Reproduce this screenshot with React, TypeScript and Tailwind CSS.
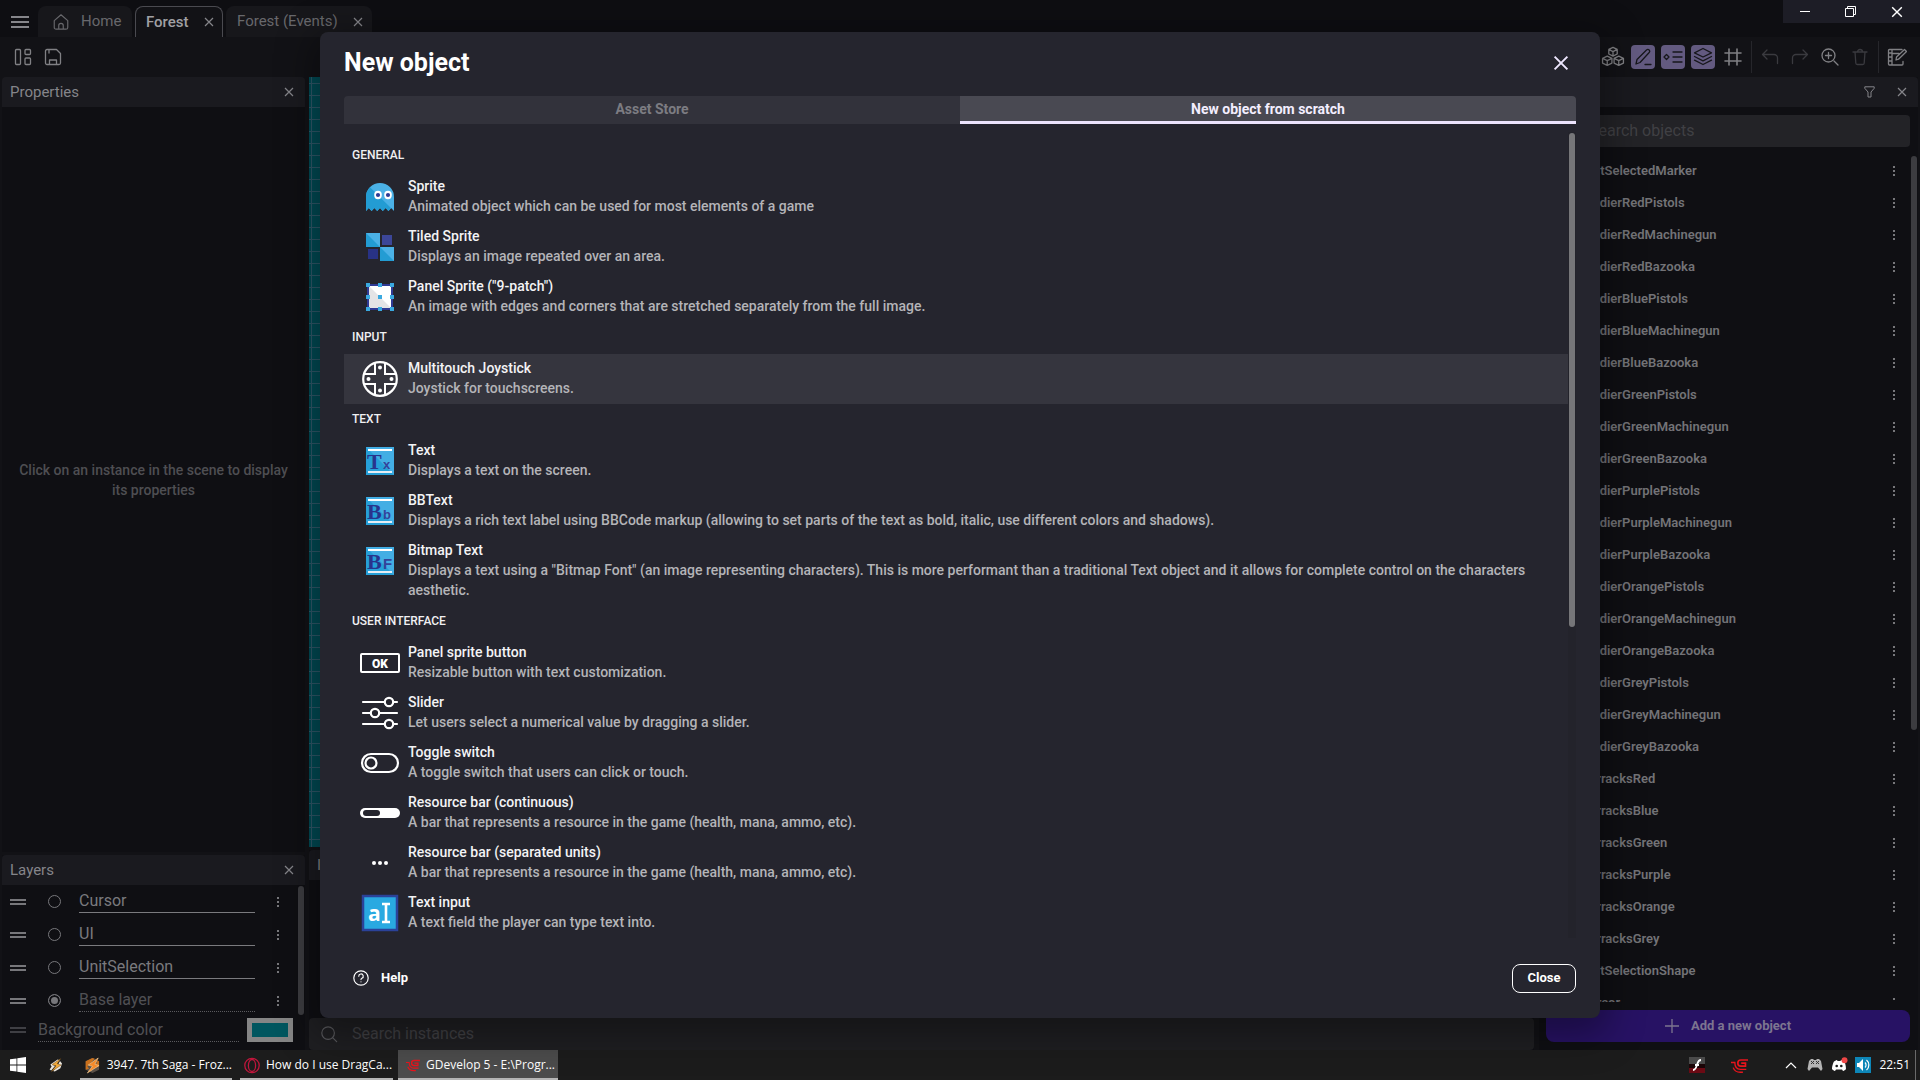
import React from "react";

type P = { className?: string; size?: number; children?: React.ReactNode };

const Svg = ({ size = 20, className = "", children }: P) => (
  <svg
    width={size}
    height={size}
    viewBox="0 0 20 20"
    fill="none"
    stroke="currentColor"
    strokeWidth="1.3"
    strokeLinecap="round"
    strokeLinejoin="round"
    className={"shrink-0 " + className}
    aria-hidden="true"
  >
    {children}
  </svg>
);

const Cross = ({ size = 10, className = "" }: P) => (
  <svg width={size} height={size} viewBox="0 0 10 10" fill="none" stroke="currentColor" strokeWidth="1.2" className={"shrink-0 " + className} aria-hidden="true">
    <path d="M1 1l8 8M9 1l-8 8" />
  </svg>
);

const Dots = () => (
  <svg width="4" height="12" viewBox="0 0 4 12" fill="currentColor" aria-hidden="true">
    <rect x="1" y="1" width="2" height="2" />
    <rect x="1" y="5" width="2" height="2" />
    <rect x="1" y="9" width="2" height="2" />
  </svg>
);

/* ---------- object icons ---------- */

const I40 = ({ children }: { children: React.ReactNode }) => (
  <svg width="40" height="40" viewBox="0 0 40 40" fill="none" className="-mb-px mt-px shrink-0" aria-hidden="true">
    {children}
  </svg>
);

const GhostIcon = () => (
  <I40>
    <path d="M6 34V20a14 14 0 0 1 28 0v14l-2.800-3-2.800 3-2.800-3-2.800 3-2.800-3-2.800 3-2.800-3-2.800 3-2.800-3z" fill="#4bb1e6" />
    <path d="M10 10.200a14 14 0 0 0-4 9.800v14l2.800-3 2.800 3 2.800-3 2.800 3 2.800-3 2.800 3 2.800-3 2.800 3 2.800-3 2.800 3z" fill="#239cd3" />
    <ellipse cx="18" cy="18" rx="3.800" ry="4.200" fill="#fff" />
    <ellipse cx="28" cy="18" rx="3.800" ry="4.200" fill="#fff" />
    <circle cx="18" cy="18" r="2.100" fill="#2e3b94" />
    <circle cx="28" cy="18" r="2.100" fill="#2e3b94" />
  </I40>
);

const TiledIcon = () => (
  <I40>
    <path d="M6 6h14v14H6z" fill="#4bb1e6" />
    <path d="M6 6l14 14H6z" fill="#239cd3" />
    <path d="M20 20h14v14H20z" fill="#4bb1e6" />
    <path d="M20 20l14 14H20z" fill="#239cd3" />
    <path d="M22 8h10v10H22z" fill="#3c4698" />
    <path d="M8 22h10v10H8z" fill="#283286" />
  </I40>
);

const PanelIcon = () => (
  <I40>
    <path d="M8 8h24v24H8z" fill="#fff" />
    <path d="M8 8l24 24H8z" fill="#e4e4e6" />
    <path d="M8 8h24v24H8z" stroke="#2f3a94" strokeWidth="2" />
    <g fill="#3aa9e0">
      <path d="M6 6h4v4H6zM18 6h4v4h-4zM30 6h4v4h-4zM6 18h4v4H6zM18 18h4v4h-4zM30 18h4v4h-4zM6 30h4v4H6zM18 30h4v4h-4zM30 30h4v4h-4z" />
    </g>
  </I40>
);

const JoystickIcon = () => (
  <I40>
    <circle cx="20" cy="20" r="16.800" stroke="#fff" strokeWidth="2.200" />
    <path d="M15 4v11H4M25 4v11h11M15 36V25H4M25 36V25h11" stroke="#fff" strokeWidth="2" />
    <g fill="#fff">
      <circle cx="20" cy="8.500" r="2" />
      <circle cx="20" cy="31.500" r="2" />
      <circle cx="8.500" cy="20" r="2" />
      <circle cx="31.500" cy="20" r="2" />
    </g>
  </I40>
);

const LetterIcon = ({ big, small, upper }: { big: string; small: string; upper?: boolean }) => (
  <I40>
    <path d="M6 6h28v28H6z" fill="#43aee4" />
    <path d="M6 6l28 28H6z" fill="#26a0d8" />
    <path d="M8 8h24v2H8z" fill="#fff" />
    <path d="M8 30h24v2H8z" fill="#e6eef5" />
    <text x="7" y="28" fill="#28348c" fontFamily="Liberation Serif, serif" fontWeight="700" fontSize="22">
      {big}
    </text>
    <text x="23" y="28" fill="#34439a" fontFamily="Liberation Sans, sans-serif" fontWeight="700" fontSize={upper ? 15 : 13}>
      {small}
    </text>
  </I40>
);

const OkIcon = () => (
  <I40>
    <rect x="1" y="11" width="38" height="18" rx="1" stroke="#fff" strokeWidth="2" />
    <text x="20" y="25" textAnchor="middle" fill="#fff" fontFamily="Roboto, sans-serif" fontWeight="900" fontSize="12">
      OK
    </text>
  </I40>
);

const SliderIcon = () => (
  <I40>
    <g stroke="#fff" strokeWidth="2.200" strokeLinecap="round">
      <path d="M3 9h21M34 9h3M3 20h7M20 20h17M3 31h21M34 31h3" />
      <circle cx="29" cy="9" r="4.200" />
      <circle cx="15" cy="20" r="4.200" />
      <circle cx="29" cy="31" r="4.200" />
    </g>
  </I40>
);

const ToggleIcon = () => (
  <I40>
    <rect x="2" y="11" width="36" height="18" rx="9" stroke="#fff" strokeWidth="2.200" />
    <circle cx="11" cy="20" r="5.500" stroke="#fff" strokeWidth="2.200" />
  </I40>
);

const BarIcon = () => (
  <I40>
    <rect x="0" y="15" width="40" height="10" rx="5" fill="#fff" />
    <rect x="3" y="17" width="17" height="6" rx="3" fill="#25252e" />
  </I40>
);

const UnitsIcon = () => (
  <I40>
    <circle cx="14" cy="20" r="2" fill="#fff" />
    <circle cx="20" cy="20" r="2" fill="#fff" />
    <circle cx="26" cy="20" r="2" fill="#fff" />
  </I40>
);

const InputIcon = () => (
  <I40>
    <rect x="3" y="3" width="34" height="34" fill="#29a9e1" stroke="#2b4299" strokeWidth="2.500" />
    <text x="8" y="28" fill="#fff" fontFamily="Open Sans, sans-serif" fontWeight="700" fontSize="21">
      a
    </text>
    <path d="M22 11h8M22 29h8M26 11v18" stroke="#fff" strokeWidth="2.600" />
  </I40>
);

/* ---------- data ---------- */

type Item = { icon: React.ReactNode; title: string; text: string; active?: boolean };

const SECTIONS: { name: string; items: Item[] }[] = [
  {
    name: "GENERAL",
    items: [
      { icon: <GhostIcon />, title: "Sprite", text: "Animated object which can be used for most elements of a game" },
      { icon: <TiledIcon />, title: "Tiled Sprite", text: "Displays an image repeated over an area." },
      { icon: <PanelIcon />, title: 'Panel Sprite ("9-patch")', text: "An image with edges and corners that are stretched separately from the full image." },
    ],
  },
  { name: "INPUT", items: [{ icon: <JoystickIcon />, title: "Multitouch Joystick", text: "Joystick for touchscreens.", active: true }] },
  {
    name: "TEXT",
    items: [
      { icon: <LetterIcon big="T" small="x" />, title: "Text", text: "Displays a text on the screen." },
      { icon: <LetterIcon big="B" small="b" />, title: "BBText", text: "Displays a rich text label using BBCode markup (allowing to set parts of the text as bold, italic, use different colors and shadows)." },
      {
        icon: <LetterIcon big="B" small="F" upper />,
        title: "Bitmap Text",
        text: 'Displays a text using a "Bitmap Font" (an image representing characters). This is more performant than a traditional Text object and it allows for complete control on the characters aesthetic.',
      },
    ],
  },
  {
    name: "USER INTERFACE",
    items: [
      { icon: <OkIcon />, title: "Panel sprite button", text: "Resizable button with text customization." },
      { icon: <SliderIcon />, title: "Slider", text: "Let users select a numerical value by dragging a slider." },
      { icon: <ToggleIcon />, title: "Toggle switch", text: "A toggle switch that users can click or touch." },
      { icon: <BarIcon />, title: "Resource bar (continuous)", text: "A bar that represents a resource in the game (health, mana, ammo, etc)." },
      { icon: <UnitsIcon />, title: "Resource bar (separated units)", text: "A bar that represents a resource in the game (health, mana, ammo, etc)." },
      { icon: <InputIcon />, title: "Text input", text: "A text field the player can type text into." },
    ],
  },
];

const OBJECTS = [
  "UnitSelectedMarker",
  "SoldierRedPistols",
  "SoldierRedMachinegun",
  "SoldierRedBazooka",
  "SoldierBluePistols",
  "SoldierBlueMachinegun",
  "SoldierBlueBazooka",
  "SoldierGreenPistols",
  "SoldierGreenMachinegun",
  "SoldierGreenBazooka",
  "SoldierPurplePistols",
  "SoldierPurpleMachinegun",
  "SoldierPurpleBazooka",
  "SoldierOrangePistols",
  "SoldierOrangeMachinegun",
  "SoldierOrangeBazooka",
  "SoldierGreyPistols",
  "SoldierGreyMachinegun",
  "SoldierGreyBazooka",
  "BarracksRed",
  "BarracksBlue",
  "BarracksGreen",
  "BarracksPurple",
  "BarracksOrange",
  "BarracksGrey",
  "UnitSelectionShape",
  "Cursor",
];

/* ---------- editor ---------- */

const PanelHeader = ({ title, children }: { title: string; children?: React.ReactNode }) => (
  <div className="flex h-[30px] shrink-0 items-center rounded-t bg-[#1a1a1f] pl-2 pr-[11px] text-[#85858a]">
    <h2 className="flex-1 text-[15px]">{title}</h2>
    {children}
  </div>
);

const CloseBtn = ({ label }: { label: string }) => (
  <button aria-label={label} className="text-[#85858a]">
    <Cross />
  </button>
);

const TopBar = () => (
  <header className="flex h-[37px] shrink-0 items-end bg-[#0e0e12] pl-[11px] text-[15px]">
    <button aria-label="Main menu" className="mb-2 mr-[9px] text-[#85858a]">
      <svg width="18" height="14" viewBox="0 0 18 14" fill="none" stroke="currentColor" strokeWidth="2" aria-hidden="true">
        <path d="M0 2h18M0 7h18M0 12h18" />
      </svg>
    </button>
    <nav className="flex items-end gap-[3px]">
      <button className="flex h-[31px] w-[94px] items-center gap-[11px] rounded-t-lg bg-[#17171b] pl-[14px] text-[#68686c]">
        <Svg size={18}>
          <path d="M2.500 8.500L10 2l7.500 6.500V16a2 2 0 0 1-2 2h-11a2 2 0 0 1-2-2zM7.500 18v-4a2.500 2.500 0 0 1 5 0v4" />
        </Svg>
        Home
      </button>
      <div className="flex h-[31px] w-[88px] items-center justify-between rounded-t-lg border border-b-0 border-[#4a4a50] bg-[#121216] pl-[10px] pr-2 text-[#a0a0a4]">
        <button className="font-medium">Forest</button>
        <CloseBtn label="Close Forest" />
      </div>
      <div className="flex h-[31px] w-[146px] items-center justify-between rounded-t-lg bg-[#17171b] pl-[11px] pr-[9px] text-[#68686c]">
        <button>Forest (Events)</button>
        <CloseBtn label="Close Forest (Events)" />
      </div>
    </nav>
    <div className="ml-auto flex h-[23px] w-[137px] items-center justify-around self-start bg-[#1d1d26] text-white">
      <button aria-label="Minimize" className="h-px w-[10px] bg-white" />
      <button aria-label="Restore">
        <svg width="11" height="11" viewBox="0 0 11 11" fill="none" stroke="currentColor" aria-hidden="true">
          <path d="M.5 2.500h8v8h-8zM2.500 2.500v-2h8v8h-2" />
        </svg>
      </button>
      <button aria-label="Close window">
        <Cross size={12} />
      </button>
    </div>
  </header>
);

const ToolOn = ({ label, children }: { label: string; children: React.ReactNode }) => (
  <button aria-label={label} className="flex size-6 items-center justify-center rounded bg-[#635a80] text-[#17171b]">
    {children}
  </button>
);

const Toolbar = () => (
  <div className="flex h-10 shrink-0 items-center bg-[#121216] pl-[13px] pr-[13px] text-[#808084]">
    <button aria-label="Open panels" className="mr-[10px]">
      <Svg>
        <rect x="2.500" y="2.500" width="5" height="15" rx="1" />
        <rect x="12" y="2.500" width="5.500" height="5" rx="1" />
        <rect x="12" y="11" width="5.500" height="6.500" rx="1" />
      </Svg>
    </button>
    <button aria-label="Save">
      <Svg>
        <path d="M2.500 4a1.500 1.500 0 0 1 1.500-1.500h9.500l4 4V16a1.500 1.500 0 0 1-1.500 1.500H4A1.500 1.500 0 0 1 2.500 16zM6 2.500V6M6.500 17.500V13h7v4.500" />
      </Svg>
    </button>
    <div className="ml-auto flex items-center gap-[6px]">
      <button aria-label="Objects">
        <Svg size={24} className="[stroke-width:1.1]">
          <path d="M10 2l3.500 1.700v3.800L10 9.300 6.500 7.500V3.700zM6.500 3.700L10 5.500l3.500-1.800M10 5.500v3.800" />
          <path d="M5.200 9.200l3.900 1.900v4L5.200 17l-3.900-1.900v-4zM1.300 11.100L5.200 13l3.900-1.900M5.200 13v4" />
          <path d="M14.800 9.200l3.900 1.900v4L14.800 17l-3.900-1.900v-4zM10.900 11.100l3.900 1.900 3.900-1.900M14.800 13v4" />
        </Svg>
      </button>
      <ToolOn label="Edit properties">
        <Svg>
          <path d="M3 17l1-4.500L13.500 3a1.800 1.800 0 0 1 2.700 0 1.800 1.800 0 0 1 0 2.500L7 15.500zM12 17.500h6" />
        </Svg>
      </ToolOn>
      <ToolOn label="Instances list">
        <Svg>
          <path d="M3.500 7.500L6 10l-2.500 2.500L1 10zM10 5h9M10 10h9M10 15h9" />
        </Svg>
      </ToolOn>
      <ToolOn label="Layers">
        <Svg>
          <path d="M10 1.500l8.500 4.300L10 10 1.500 5.800zM1.500 9.500L10 13.800l8.500-4.300M1.500 13.200L10 17.500l8.500-4.300" />
        </Svg>
      </ToolOn>
      <button aria-label="Toggle grid" className="ml-[2px]">
        <Svg className="[stroke-width:1.6]">
          <path d="M6 2v16M14 2v16M2 6h16M2 14h16" />
        </Svg>
      </button>
      <span className="mx-[2px] h-8 w-px bg-[#26262b]" />
      <button aria-label="Undo" className="mr-1 text-[#3a3a3f]">
        <Svg>
          <path d="M7 3L2.500 7.500 7 12M2.500 7.500H14a3.500 3.500 0 0 1 3.500 3.500v5.500" />
        </Svg>
      </button>
      <button aria-label="Redo" className="mr-1 text-[#3a3a3f]">
        <Svg>
          <path d="M13 3l4.500 4.500L13 12M17.500 7.500H6A3.500 3.500 0 0 0 2.500 11v5.500" />
        </Svg>
      </button>
      <button aria-label="Zoom in" className="mr-1">
        <Svg>
          <path d="M14 14l4 4M8.500 5.500v6M5.500 8.500h6" />
          <circle cx="8.500" cy="8.500" r="6.500" />
        </Svg>
      </button>
      <button aria-label="Delete" className="text-[#3a3a3f]">
        <Svg>
          <path d="M3 5h14M5 5l.8 11a1.500 1.500 0 0 0 1.500 1.500h5.400a1.500 1.500 0 0 0 1.500-1.500L15 5M7.500 5a2.500 2.500 0 0 1 5 0" />
        </Svg>
      </button>
      <span className="mx-[2px] h-8 w-px bg-[#26262b]" />
      <button aria-label="Scene properties">
        <Svg>
          <path d="M16 14.500V17a1 1 0 0 1-1 1H2.500a1 1 0 0 1-1-1V3.500a1 1 0 0 1 1-1H15M5 2.500V18M1.500 6H5M1.500 10H5M1.500 14H5M9 13l.5-3 8-7.500 2 2-8 7.700zM5 6.500h7" />
        </Svg>
      </button>
    </div>
  </div>
);

const Handle = ({ dim }: { dim?: boolean }) => (
  <span className={"flex h-[6px] w-4 shrink-0 flex-col justify-between " + (dim ? "text-[#3f3f44]" : "text-[#77777b]")}>
    <span className="h-[2px] bg-current" />
    <span className="h-[2px] bg-current" />
  </span>
);

const LayerRow = ({ name, base }: { name: string; base?: boolean }) => (
  <div className="flex h-[33px] items-center pl-2">
    <Handle />
    <input
      type="radio"
      name="layer"
      aria-label={"Select layer " + name}
      defaultChecked={base}
      className="ml-[22px] mr-[18px] size-[13px] shrink-0 appearance-none rounded-full border border-[#77777b] checked:bg-[#77777b] checked:shadow-[inset_0_0_0_2px_#0f0f13]"
    />
    <input
      aria-label={"Layer name " + name}
      defaultValue={name}
      className={
        "h-[23px] w-[176px] border-b bg-transparent text-base outline-none " +
        (base ? "border-dotted border-[#5a5a5e] text-[#505054]" : "border-[#7a7a7e] text-[#7a7a7e]")
      }
    />
    <button aria-label={"Options for " + name} className="ml-[21px] text-[#77777b]">
      <Dots />
    </button>
  </div>
);

const LeftColumn = () => (
  <aside className="flex w-[303px] shrink-0 flex-col gap-[3px]">
    <section className="flex min-h-0 flex-1 flex-col">
      <PanelHeader title="Properties">
        <CloseBtn label="Close properties" />
      </PanelHeader>
      <div className="flex flex-1 items-center justify-center bg-[#0f0f13] px-3 text-center text-sm font-medium leading-5 text-[#4e4e52]">
        Click on an instance in the scene to display its properties
      </div>
    </section>
    <section className="flex h-[195px] flex-col bg-[#0f0f13]">
      <PanelHeader title="Layers">
        <CloseBtn label="Close layers" />
      </PanelHeader>
      <div className="flex">
        <div className="flex-1">
          <LayerRow name="Cursor" />
          <LayerRow name="UI" />
          <LayerRow name="UnitSelection" />
          <LayerRow name="Base layer" base />
        </div>
        <div className="mr-px mt-px h-[129px] w-[6px] rounded bg-[#3c3c40]" />
      </div>
      <div className="flex h-[26px] items-center pl-2">
        <Handle dim />
        <input
          aria-label="Background color"
          defaultValue="Background color"
          readOnly
          className="ml-3 h-6 w-[201px] border-b border-dotted border-[#5a5a5e] bg-transparent text-base text-[#505054] outline-none"
        />
        <button aria-label="Pick background color" className="ml-2 h-6 w-[46px] border-[5px] border-[#858585] bg-[#00565f]" />
      </div>
    </section>
  </aside>
);

const Center = () => (
  <main className="flex min-w-0 flex-1 flex-col gap-[3px]">
    <div className="flex-1 bg-[#004a54] bg-[linear-gradient(#2f5768_1px,transparent_1px),linear-gradient(90deg,#2f5768_1px,transparent_1px)] bg-[size:12px_12px] bg-[position:2px_6px]" />
    <section className="flex h-[200px] flex-col bg-[#0f0f13]">
      <PanelHeader title="Instances List" />
      <label className="mt-auto flex h-8 items-center gap-[14px] rounded bg-[#1f1f22] pl-[11px] text-[#5a5a5e]">
        <Svg size={18}>
          <circle cx="9" cy="9" r="7" />
          <path d="M14 14l4.500 4.500" />
        </Svg>
        <input aria-label="Search instances" placeholder="Search instances" className="flex-1 bg-transparent text-base outline-none placeholder:text-[#404044]" />
      </label>
    </section>
  </main>
);

const RightColumn = () => (
  <aside className="flex w-[379px] shrink-0 flex-col bg-[#0f0f13] pb-2">
    <PanelHeader title="Objects">
      <button aria-label="Filter" className="mr-[22px] text-[#85858a]">
        <svg width="11" height="12" viewBox="0 0 11 12" fill="none" stroke="currentColor" aria-hidden="true">
          <path d="M.8.800h9.400v1.500L7 6v5H4V6L.8 2.300z" />
        </svg>
      </button>
      <CloseBtn label="Close objects" />
    </PanelHeader>
    <label className="ml-[7px] mr-2 mt-2 flex h-8 shrink-0 items-center gap-[14px] rounded bg-[#232327] pl-[11px] text-[#5a5a5e]">
      <Svg size={18}>
        <circle cx="9" cy="9" r="7" />
        <path d="M14 14l4.500 4.500" />
      </Svg>
      <input aria-label="Search objects" placeholder="Search objects" className="min-w-0 flex-1 bg-transparent text-base outline-none placeholder:text-[#404044]" />
    </label>
    <div className="mt-2 flex min-h-0 flex-1 overflow-hidden">
      <ul className="flex-1">
        {OBJECTS.map((o) => (
          <li key={o} className="flex h-8 items-center pl-[42px] pr-[15px] text-[13px] font-semibold text-[#737377]">
            <span className="flex-1">{o}</span>
            <button aria-label={"Options for " + o} className="text-[#77777b]">
              <Dots />
            </button>
          </li>
        ))}
      </ul>
      <div className="mr-px mt-px h-[574px] w-[6px] rounded bg-[#3c3c40]" />
    </div>
    <button className="ml-[7px] mr-2 mt-2 flex h-8 shrink-0 items-center justify-center gap-3 rounded-lg bg-[#271264] text-[13px] font-bold text-[#7d7590]">
      <svg width="14" height="14" viewBox="0 0 14 14" stroke="currentColor" strokeWidth="1.300" aria-hidden="true">
        <path d="M7 0v14M0 7h14" />
      </svg>
      Add a new object
    </button>
  </aside>
);

/* ---------- dialog ---------- */

const Dialog = () => (
  <div className="absolute inset-0 flex justify-center p-8">
    <section
      role="dialog"
      aria-label="New object"
      className="flex w-full max-w-[1280px] flex-col rounded-lg bg-[#25252e] px-6 shadow-[0_10px_36px_8px_rgba(0,0,0,0.35)]"
    >
      <div className="flex h-16 shrink-0 items-center justify-between pb-[2px] pr-[7px]">
        <h1 className="text-[25px] font-bold text-white">New object</h1>
        <button aria-label="Close dialog" className="text-[#efe8ff]">
          <Cross size={16} />
        </button>
      </div>
      <div role="tablist" className="flex h-7 shrink-0 text-sm font-bold">
        <button role="tab" aria-selected="false" className="flex-1 rounded-tl bg-[#32323b] pb-[3px] text-[#7c7c82]">
          Asset Store
        </button>
        <button role="tab" aria-selected="true" className="flex-1 rounded-tr border-b-[3px] border-[#ece4fd] bg-[#494952] text-[#f3eeff]">
          New object from scratch
        </button>
      </div>
      <div className="mt-2 flex min-h-0 flex-1 overflow-hidden">
        <div className="min-w-0 flex-1 pt-2">
          {SECTIONS.map((s) => (
            <section key={s.name}>
              <h2 className="h-8 pl-2 pt-[5px] text-xs font-medium leading-5 text-[#f0f0f2]">{s.name}</h2>
              <ul>
                {s.items.map((it) => (
                  <li key={it.title}>
                    <button className={"flex w-full items-start gap-2 pb-[6px] pl-4 pr-4 pt-1 text-left text-sm font-medium leading-5 " + (it.active ? "bg-[#35353e]" : "")}>
                      {it.icon}
                      <span className="min-w-0 flex-1">
                        <span className="block text-[#f3f3f5]">{it.title}</span>
                        <span className="block text-[#b4b4b8]">{it.text}</span>
                      </span>
                    </button>
                  </li>
                ))}
              </ul>
            </section>
          ))}
        </div>
        <div className="w-2 bg-[#23232b] px-px">
          <div className="mt-px h-[494px] w-[6px] rounded bg-[#767679]" />
        </div>
      </div>
      <div className="flex h-20 shrink-0 items-center justify-between pl-2">
        <button className="flex items-center gap-[11px] text-[13px] font-bold text-white">
          <Svg size={18}>
            <circle cx="10" cy="10" r="8" />
            <path d="M7.500 8a2.500 2.500 0 1 1 3.500 2.300c-.7.300-1 .700-1 1.500M10 14.200v.1" />
          </Svg>
          Help
        </button>
        <button className="h-[29px] w-16 rounded-lg border border-white text-[13px] font-bold text-white">Close</button>
      </div>
    </section>
  </div>
);

/* ---------- taskbar ---------- */

const Bolt = () => (
  <>
    <path d="M12 3l2.500 1L6 10l3 1-5 6-2-1.500L4.500 12 3 9.500zM15 5l2.500 3-2 6-7 4-2-.5 5-6z" fill="#e9e4dc" />
    <path d="M16 2L5 9.500l5 1.500-6 7.500L16.500 10l-5-1.500z" fill="#f0a93c" stroke="#5a3a12" strokeWidth=".5" />
  </>
);

const GD = ({ size = 18 }: { size?: number }) => (
  <svg width={size} height={size} viewBox="0 0 20 20" fill="none" stroke="#e8141c" strokeWidth="2" aria-hidden="true">
    <path d="M20 3.500H11.500C9 3.500 8 5 8 7.200c0 2.300 1 3.600 3.500 3.600H17V7.300h-5" />
    <path d="M0 6.500h4.500c0 5.500 2.500 8 6.500 8h7M2.500 12.500c1.500 4 4 5.500 8.500 5.500h3" strokeWidth="1.600" />
  </svg>
);

const Task = ({ icon, text, active, className }: { icon: React.ReactNode; text: string; active?: boolean; className: string }) => (
  <button
    className={
      "flex h-[30px] items-center gap-[6px] border-b-2 border-[#b5b5b5] pt-[2px] text-xs text-white " + (active ? "bg-[#4c4c4c] " : "") + className
    }
  >
    {icon}
    <span className="whitespace-nowrap">{text}</span>
  </button>
);

const Taskbar = () => (
  <footer className="flex h-[30px] shrink-0 items-center bg-[#1c1c1c] font-['Open_Sans','Noto_Sans',sans-serif]">
    <button aria-label="Start" className="ml-[10px] text-white">
      <svg width="16" height="16" viewBox="0 0 16 16" fill="currentColor" aria-hidden="true">
        <path d="M0 2.300L6.500 1.400v6.200H0zM7.300 1.300L16 0v7.600H7.300zM0 8.400h6.500v6.200L0 13.700zM7.300 8.400H16V16l-8.700-1.300z" />
      </svg>
    </button>
    <button aria-label="Winamp" className="ml-[22px]">
      <svg width="16" height="16" viewBox="0 0 20 20" aria-hidden="true">
        <Bolt />
      </svg>
    </button>
    <div className="ml-4 flex gap-2">
      <Task
        className="w-[152px] pl-1"
        text="3947. 7th Saga - Froz..."
        icon={
          <svg width="17" height="17" viewBox="0 0 20 20" aria-hidden="true">
            <path d="M10 1l8 4v10l-8 4-8-4V5z" fill="#5b5148" />
            <path d="M2 5l8-4 3 1-9 9 2 3-4 1zM16 4l2 1v6l-5 2z" fill="#c9701c" />
            <path d="M17 1L5 9.500l5 1.500-6 8L18 10l-5-1.500z" fill="#f58a2a" stroke="#ffd9a0" strokeWidth=".7" />
          </svg>
        }
      />
      <Task
        className="w-[153px] pl-1"
        text="How do I use DragCa..."
        icon={
          <svg width="16" height="17" viewBox="0 0 20 20" fill="none" stroke="#c0163c" aria-hidden="true">
            <circle cx="10" cy="10" r="9" strokeWidth="1.600" />
            <ellipse cx="10" cy="10" rx="4.500" ry="7.500" strokeWidth="1.600" />
          </svg>
        }
      />
      <Task active className="-ml-[3px] w-[160px] pl-2" text="GDevelop 5 - E:\Progr..." icon={<GD size={14} />} />
    </div>
    <div className="ml-auto flex h-full items-center text-xs text-white">
      <svg width="16" height="16" viewBox="0 0 16 16" className="mr-[26px]" aria-hidden="true">
        <path d="M0 0h16v16H0z" fill="#1a0507" />
        <path d="M0 0h16v7H0z" fill="#4a4a4a" />
        <path d="M0 11h16v5H0z" fill="#6b0a14" />
        <path d="M12 3c-3 0-3 2-4 5s-1.500 5-4 5M6 8h4" stroke="#fff" strokeWidth="1.800" fill="none" />
      </svg>
      <GD size={17} />
      <svg width="12" height="7" viewBox="0 0 12 7" fill="none" stroke="currentColor" strokeWidth="1.200" className="ml-[37px]" aria-hidden="true">
        <path d="M1 6l5-5 5 5" />
      </svg>
      <svg width="16" height="14" viewBox="0 0 16 14" className="ml-[10px]" aria-hidden="true">
        <path d="M4 1h2l1 1h2l1-1h2l2 2 1.500 8-1.500 2-3-3.500H5L2 13 .5 11 2 3z" fill="#b4b4b4" />
        <path d="M4 3l3 3M7 3L4 6M9 6l3-3M9 3l3 3" stroke="#333" />
      </svg>
      <svg width="17" height="16" viewBox="0 0 17 16" className="ml-2" aria-hidden="true">
        <path d="M3 4.500C5 3 6 3 6 3l.5 1h3L10 3s2 .3 3.500 1.500C15 8 15 12 15 12c-1 1.500-3 2-3 2l-1-1.500H5L4 14s-2-.5-3-2c0 0 0-4 2-7.500z" fill="#fff" />
        <circle cx="5.700" cy="9" r="1.300" fill="#1c1c1c" />
        <circle cx="10.300" cy="9" r="1.300" fill="#1c1c1c" />
        <circle cx="13.500" cy="3.200" r="3" fill="#f04747" />
      </svg>
      <svg width="16" height="16" viewBox="0 0 16 16" className="ml-[7px] mr-2" fill="none" aria-hidden="true">
        <path d="M0 0h16v16H0z" fill="#0d86b8" />
        <path d="M2 6h2l4-4v12l-4-4H2z" fill="#fff" />
        <path d="M10 5.500a3.500 3.500 0 0 1 0 5M11.500 3a6.500 6.500 0 0 1 0 10" stroke="#fff" strokeWidth="1.200" />
      </svg>
      <time className="mr-[5px]">22:51</time>
      <span className="mr-1 h-full w-px bg-[#6a6a6a]" />
    </div>
  </footer>
);

export default function App() {
  return (
    <div className="flex h-screen flex-col overflow-hidden bg-[#121216] font-['Roboto','Noto_Sans',sans-serif]">
      <div className="relative flex min-h-0 flex-1 flex-col">
        <TopBar />
        <Toolbar />
        <div className="flex min-h-0 flex-1 px-[2px]">
          <LeftColumn />
          <div className="w-1 shrink-0" />
          <Center />
          <div className="w-[5px] shrink-0" />
          <RightColumn />
        </div>
        <Dialog />
      </div>
      <Taskbar />
    </div>
  );
}
